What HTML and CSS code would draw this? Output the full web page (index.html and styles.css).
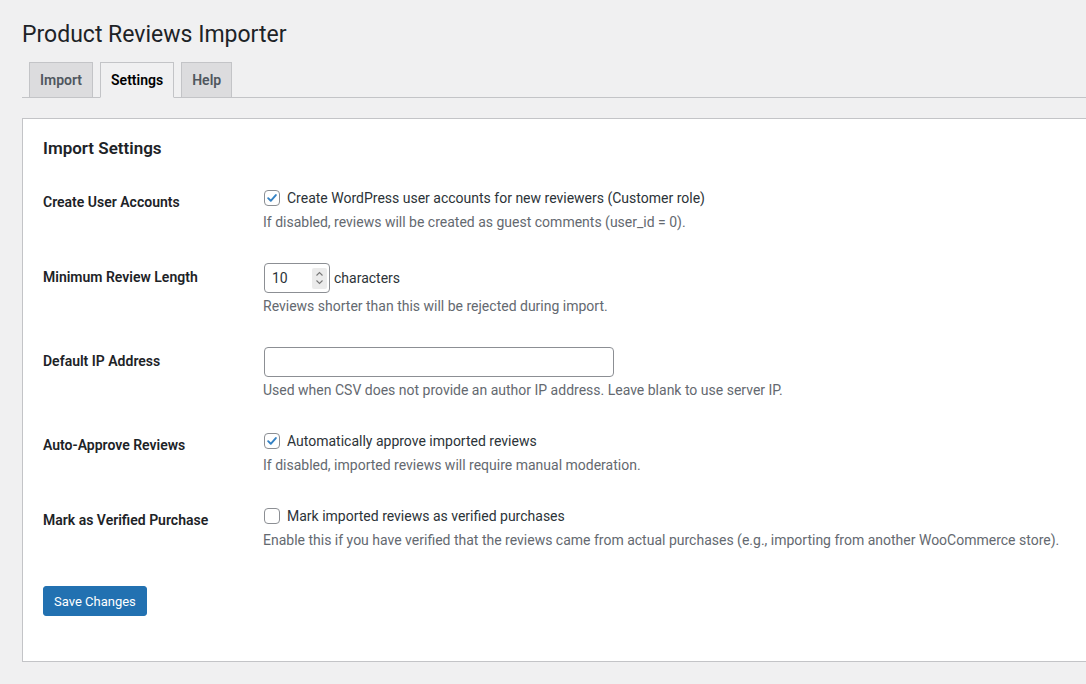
FILE: index.html
```html
<!DOCTYPE html>
<html>
    <head>
        <title>
            Product Reviews Importer
        </title>
        <link rel="stylesheet" href="styles.css">
    </head>
    <body>
        <div class="wrap">
            <h1 class="page-title">Product Reviews Importer</h1>

            <nav class="nav-tabs">
                <a class="nav-tab" href="#">Import</a>
                <a class="nav-tab nav-tab-active" href="#">Settings</a>
                <a class="nav-tab" href="#">Help</a>
            </nav>

            <div class="card">
                <h2 class="card-title">Import Settings</h2>

                <table class="form-table">
                    <tr>
                        <th>Create User Accounts</th>
                        <td>
                            <label class="check-line">
                                <span class="checkbox">
                                    <svg width="16" height="16" viewBox="0 0 16 16"><path d="M3.6 8.2 L6.6 11.2 L12.4 4.6" fill="none" stroke="#3582c4" stroke-width="2.2" stroke-linecap="round" stroke-linejoin="round"/></svg>
                                </span>
                                Create WordPress user accounts for new reviewers (Customer role)
                            </label>
                            <p class="description check-desc">If disabled, reviews will be created as guest comments (user_id = 0).</p>
                        </td>
                    </tr>
                    <tr>
                        <th>Minimum Review Length</th>
                        <td>
                            <div class="field-line">
                                <span class="number-input">
                                    <span class="number-value">10</span>
                                    <span class="spinner">
                                        <svg width="9" height="16" viewBox="0 0 9 16"><path d="M1.5 5.5 L4.5 2.5 L7.5 5.5 M1.5 10.5 L4.5 13.5 L7.5 10.5" fill="none" stroke="#777" stroke-width="1.1"/></svg>
                                    </span>
                                </span>
                                <span class="unit">characters</span>
                            </div>
                            <p class="description field-desc">Reviews shorter than this will be rejected during import.</p>
                        </td>
                    </tr>
                    <tr>
                        <th>Default IP Address</th>
                        <td>
                            <div class="field-line">
                                <span class="text-input"></span>
                            </div>
                            <p class="description field-desc">Used when CSV does not provide an author IP address. Leave blank to use server IP.</p>
                        </td>
                    </tr>
                    <tr>
                        <th>Auto-Approve Reviews</th>
                        <td>
                            <label class="check-line">
                                <span class="checkbox">
                                    <svg width="16" height="16" viewBox="0 0 16 16"><path d="M3.6 8.2 L6.6 11.2 L12.4 4.6" fill="none" stroke="#3582c4" stroke-width="2.2" stroke-linecap="round" stroke-linejoin="round"/></svg>
                                </span>
                                Automatically approve imported reviews
                            </label>
                            <p class="description check-desc">If disabled, imported reviews will require manual moderation.</p>
                        </td>
                    </tr>
                    <tr>
                        <th>Mark as Verified Purchase</th>
                        <td>
                            <label class="check-line">
                                <span class="checkbox"></span>
                                Mark imported reviews as verified purchases
                            </label>
                            <p class="description check-desc">Enable this if you have verified that the reviews came from actual purchases (e.g., importing from another WooCommerce store).</p>
                        </td>
                    </tr>
                </table>

                <p class="submit">
                    <button type="button" class="button-primary">Save Changes</button>
                </p>
            </div>
        </div>
    </body>
</html>
```

FILE: styles.css
```css
body{
    margin: 0;
    background-color: #f0f0f1;
    font-family: Roboto, "Liberation Sans", sans-serif;
    font-size: 13px;
    color: #3c434a;
    overflow: hidden;
}
.wrap{
    padding-left: 22px;
}
.page-title{
    margin: 0 0 12px 0;
    padding-top: 20px;
    font-size: 23px;
    font-weight: 400;
    line-height: 30px;
    color: #1d2327;
}
.nav-tabs{
    display: flex;
    gap: 7px;
    padding-left: 7px;
    border-bottom: 1px solid #c3c4c7;
}
.nav-tab{
    display: block;
    margin-bottom: -1px;
    padding: 5px 10px;
    border: 1px solid #c3c4c7;
    background-color: #dcdcde;
    color: #50575e;
    font-size: 14px;
    font-weight: 600;
    line-height: 24px;
    text-decoration: none;
}
.nav-tab-active{
    background-color: #f0f0f1;
    border-bottom-color: #f0f0f1;
    color: #000;
}
.card{
    margin-top: 20px;
    padding: 20px 0 20px 20px;
    background-color: #fff;
    border: 1px solid #c3c4c7;
    border-right: none;
}
.card-title{
    margin: 0 0 17px 0;
    font-size: 17px;
    font-weight: 600;
    line-height: 18px;
    color: #1d2327;
}
.form-table{
    border-collapse: collapse;
}
.form-table th{
    width: 200px;
    min-width: 200px;
    padding: 20px 20px 20px 0;
    text-align: left;
    vertical-align: top;
    font-size: 14px;
    font-weight: 600;
    line-height: 17px;
    color: #1d2327;
}
.form-table td{
    padding: 16px 0 15px 0;
    vertical-align: top;
    line-height: 17px;
}
.check-line{
    display: flex;
    align-items: center;
    gap: 7px;
    height: 16px;
    padding-left: 1px;
    font-size: 14px;
    color: #2c3338;
}
.checkbox{
    display: flex;
    width: 14px;
    height: 14px;
    border: 1px solid #8c8f94;
    border-radius: 4px;
    background-color: #fff;
    align-items: center;
    justify-content: center;
}
.description{
    margin: 0 0 3px 0;
    font-size: 14px;
    line-height: 17px;
    color: #646970;
    white-space: nowrap;
}
.check-desc{
    margin-top: 8px;
}
.field-desc{
    margin-top: 5px;
}
.field-line{
    display: flex;
    align-items: center;
    gap: 4px;
    margin-top: -2px;
    padding-left: 1px;
}
.number-input{
    display: flex;
    align-items: center;
    justify-content: space-between;
    box-sizing: border-box;
    width: 66px;
    height: 30px;
    padding: 0 2px 0 7px;
    border: 1px solid #8c8f94;
    border-radius: 4px;
    font-size: 14px;
    color: #2c3338;
}
.spinner{
    display: flex;
    align-items: center;
    justify-content: center;
    width: 15px;
    height: 21px;
    border-radius: 2px;
    background-color: #ebebeb;
}
.unit{
    font-size: 14px;
    color: #2c3338;
}
.text-input{
    display: block;
    box-sizing: border-box;
    width: 350px;
    height: 30px;
    border: 1px solid #8c8f94;
    border-radius: 4px;
}
.submit{
    margin: 19px 0 25px 0;
}
.button-primary{
    height: 30px;
    padding: 0 10px;
    border: 1px solid #2271b1;
    border-radius: 3px;
    background-color: #2271b1;
    color: #fff;
    font-family: Roboto, "Liberation Sans", sans-serif;
    font-size: 13px;
    cursor: pointer;
}
```
